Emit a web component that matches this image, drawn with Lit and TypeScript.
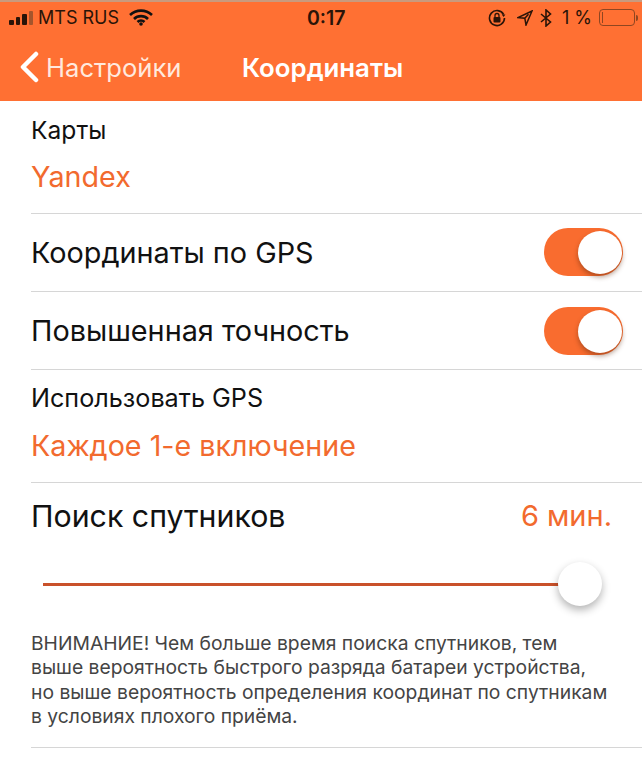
import { css, html, LitElement } from "lit";
import { customElement } from "lit/decorators.js";

@customElement("app-root")
export class AppRoot extends LitElement {
  static styles = css`
    :host {
      display: block;
      width: 642px;
      height: 768px;
      overflow: hidden;
      background: #fff;
      font-family: Inter, "Noto Sans", sans-serif;
      color: #111;
    }

    .top {
      height: 101px;
      background: #ff7033;
      border-top: 2px solid #c99a7e;
      box-sizing: border-box;
      display: flex;
      flex-direction: column;
    }

    .status {
      height: 31px;
      padding: 0 4px 0 9px;
      display: flex;
      justify-content: space-between;
      align-items: center;
      font-size: 18px;
      color: #2a1408;
      position: relative;
    }

    .status-left,
    .status-right {
      display: flex;
      align-items: center;
    }

    .status-left {
      gap: 5px;
    }

    .status-right {
      gap: 7px;
    }

    .lock {
      margin-right: 4px;
    }

    .bluetooth {
      margin-right: 3px;
    }

    .clock {
      position: absolute;
      left: 307px;
      font-weight: 600;
      font-size: 19.5px;
    }

    .bars {
      display: flex;
      align-items: flex-end;
      gap: 2px;
      height: 14px;
    }

    .bars i {
      width: 4.5px;
      background: #2a1408;
      border-radius: 1px;
    }

    .bars i.dim {
      background: #a5552c;
    }

    .battery {
      display: flex;
      align-items: center;
    }

    .battery-body {
      width: 36px;
      height: 17px;
      box-sizing: border-box;
      border: 1px solid #8f4621;
      border-radius: 4px;
      padding: 2px;
    }

    .battery-level {
      width: 1px;
      height: 100%;
      background: #8f4621;
    }

    .battery-cap {
      width: 2px;
      height: 6px;
      background: #8f4621;
      border-radius: 0 2px 2px 0;
      margin-left: 1px;
    }

    .nav {
      flex: 1;
      position: relative;
      display: flex;
      align-items: center;
      padding: 0 0 0 19px;
      color: #fff;
    }

    .back {
      display: flex;
      align-items: center;
      gap: 7px;
      font-size: 25.6px;
      color: #ffe9de;
    }

    .title {
      position: absolute;
      left: 242px;
      font-size: 25.8px;
      font-weight: 600;
    }

    .row {
      margin-left: 31px;
      border-bottom: 1px solid #d6d6d6;
      box-sizing: border-box;
    }

    .stacked {
      display: flex;
      flex-direction: column;
      padding-right: 11px;
    }

    .label {
      font-size: 24.6px;
      line-height: 30px;
    }

    .label.wide {
      font-size: 25.2px;
    }

    .value {
      color: #f26a2e;
      font-size: 28.7px;
      line-height: 34px;
    }

    .toggle-row {
      height: 78px;
      display: flex;
      align-items: center;
      justify-content: space-between;
      padding-right: 19px;
      font-size: 28.8px;
    }

    .switch {
      width: 79px;
      height: 48px;
      border-radius: 24px;
      background: #f96c2f;
      position: relative;
    }

    .switch.raised {
      margin-top: -1px;
    }

    .switch::after {
      content: "";
      position: absolute;
      top: 3px;
      right: 1px;
      width: 44px;
      height: 43px;
      border-radius: 50%;
      background: #fff;
      box-shadow: 0 3px 5px rgba(90, 40, 10, 0.45);
    }

    .search {
      border-bottom: none;
      padding: 14px 30px 0 0;
      display: flex;
      justify-content: space-between;
      align-items: center;
    }

    .search-label {
      font-size: 30.3px;
      line-height: 38px;
    }

    .search-value {
      color: #f26a2e;
      font-size: 29px;
      line-height: 38px;
    }

    .slider {
      height: 96px;
      box-sizing: border-box;
      padding: 2px 62px 0 43px;
      display: flex;
      align-items: center;
    }

    .track {
      flex: 1;
      height: 3px;
      background: #c9512a;
      position: relative;
    }

    .thumb {
      position: absolute;
      right: -22px;
      top: -21px;
      width: 44px;
      height: 44px;
      border-radius: 50%;
      background: #fff;
      box-shadow: 0 4px 9px rgba(0, 0, 0, 0.3);
    }

    .note {
      margin-left: 31px;
      height: 117px;
      box-sizing: border-box;
      border-bottom: 1px solid #d6d6d6;
      font-size: 19.3px;
      line-height: 24.4px;
      white-space: nowrap;
      color: #444;
    }
  `;

  render() {
    return html`
      <div class="top">
        <div class="status">
          <div class="status-left">
            <span class="bars">
              <i style="height:5px"></i><i style="height:8px"></i><i style="height:11px"></i><i
                class="dim"
                style="height:14px"
              ></i>
            </span>
            <span>MTS RUS</span>
            <svg width="24" height="17" viewBox="0 0 24 17" style="margin-left:5px">
              <path
                d="M1 6 A16 16 0 0 1 23 6 M5 10 A10 10 0 0 1 19 10 M8.5 13 A5 5 0 0 1 15.5 13"
                fill="none"
                stroke="#111"
                stroke-width="2.6"
              />
              <circle cx="12" cy="15" r="1.8" fill="#111" />
            </svg>
          </div>
          <div class="clock">0:17</div>
          <div class="status-right">
            <svg class="lock" width="18" height="18" viewBox="0 0 18 18">
              <path d="M15.6 5.5 A7.5 7.5 0 1 0 16.5 9" fill="none" stroke="#2a1408" stroke-width="1.6" />
              <path d="M13.8 5.4 H17.4 L15.6 8 Z" fill="#2a1408" />
              <rect x="5.5" y="8" width="7" height="5.5" rx="1" fill="#2a1408" />
              <path d="M7 8 V6.5 A2 2 0 0 1 11 6.5 V8" fill="none" stroke="#2a1408" stroke-width="1.3" />
            </svg>
            <svg width="16" height="16" viewBox="0 0 16 16">
              <path d="M15 1 L1 7.5 L7.8 8.2 L9 15 Z M11.5 4.2 L7.8 8.2" fill="none" stroke="#2a1408" stroke-width="1.5" />
            </svg>
            <svg class="bluetooth" width="12" height="18" viewBox="0 0 12 18">
              <path d="M1 5 L10.5 13 L6 17 V1 L10.5 5 L1 13" fill="none" stroke="#2a1408" stroke-width="1.6" />
            </svg>
            <span>1 %</span>
            <div class="battery">
              <div class="battery-body"><div class="battery-level"></div></div>
              <div class="battery-cap"></div>
            </div>
          </div>
        </div>
        <div class="nav">
          <div class="back">
            <svg width="20" height="32" viewBox="0 0 20 32">
              <path d="M17 3 L4 16 L17 29" fill="none" stroke="#fff" stroke-width="4.5" stroke-linecap="round" stroke-linejoin="round" />
            </svg>
            <span>Настройки</span>
          </div>
          <div class="title">Координаты</div>
        </div>
      </div>

      <div class="row stacked" style="height:113px;padding-top:14px">
        <span class="label">Карты</span>
        <span class="value" style="margin-top:15px">Yandex</span>
      </div>
      <div class="row toggle-row"><span>Координаты по GPS</span><div class="switch raised"></div></div>
      <div class="row toggle-row"><span>Повышенная точность</span><div class="switch"></div></div>
      <div class="row stacked" style="height:113px;padding-top:13px">
        <span class="label wide">Использовать GPS</span>
        <span class="value" style="margin-top:16px">Каждое 1-е включение</span>
      </div>
      <div class="row search">
        <span class="search-label">Поиск спутников</span>
        <span class="search-value">6 мин.</span>
      </div>
      <div class="slider">
        <div class="track"><div class="thumb"></div></div>
      </div>
      <div class="note">
        ВНИМАНИЕ! Чем больше время поиска спутников, тем<br />выше вероятность быстрого разряда батареи устройства,<br />но
        выше вероятность определения координат по спутникам<br />в условиях плохого приёма.
      </div>
    `;
  }
}
